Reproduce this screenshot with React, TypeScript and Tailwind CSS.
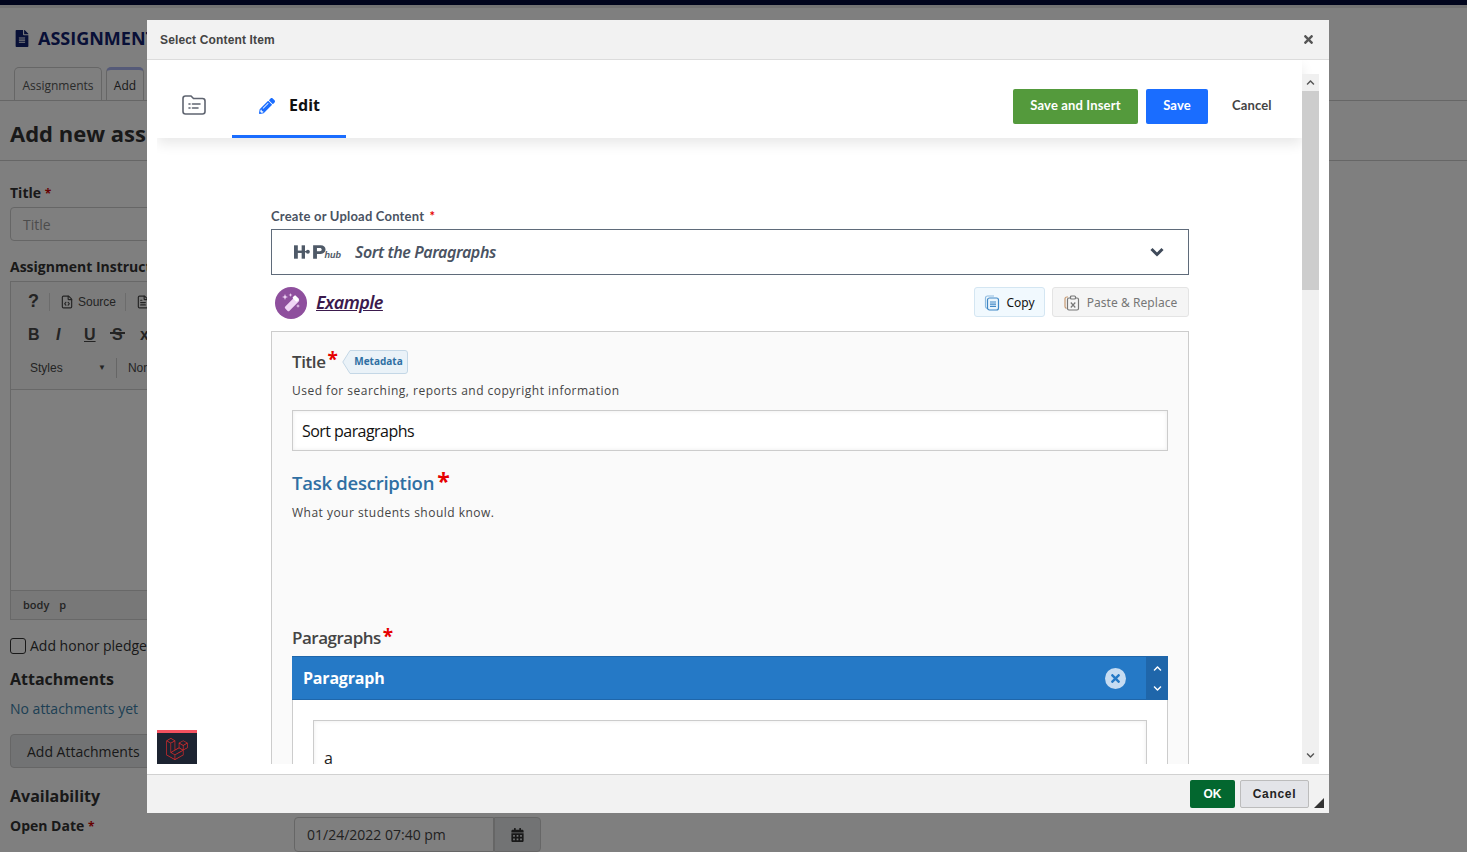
import React from "react";
import { FaFileAlt, FaCalendarAlt, FaLaravel, FaPencilAlt, FaTimes, FaChevronDown, FaChevronUp } from "react-icons/fa";
import { FileCode, FileText } from "lucide-react";

function FolderList() {
  return (
    <svg width="24" height="20" viewBox="0 0 24 20" fill="none" stroke="#5f6470" strokeWidth="1.6">
      <path d="M1 3.500C1 2 2 1 3.500 1H9l2.500 2.500h9C22 3.500 23 4.500 23 6v10.500c0 1.500-1 2.500-2.500 2.500h-17C2 19 1 18 1 16.500z" />
      <path d="M7 9h1M7 13h1M10.500 9H18M10.500 13H16" strokeLinecap="round" />
    </svg>
  );
}

function H5PLogo() {
  return (
    <svg width="34" height="16" viewBox="0 0 34 16" fill="#4f5a68">
      <rect x="0" y="1" width="4" height="14" />
      <rect x="8" y="1" width="3.500" height="14" />
      <rect x="3" y="6.500" width="6" height="2.500" />
      <rect x="11" y="7" width="5" height="1.400" />
      <circle cx="14.500" cy="7.700" r="2" />
      <path d="M20 1h8c3 0 5 1.800 5 4.500S31 10 28 10h-4v5h-4zM24 3.800v3.500h3c1.200 0 2-.7 2-1.800s-.8-1.700-2-1.700z" fillRule="evenodd" />
    </svg>
  );
}

function Wand() {
  return (
    <svg width="20" height="20" viewBox="0 0 20 20" fill="#f0d5f5">
      <rect x="8" y="3" width="6" height="16" rx="1.500" transform="rotate(45 11 11)" />
      <rect x="11.800" y="3.500" width="6" height="4" rx="1" transform="rotate(45 14.800 5.500)" fill="#ffffff" />
      <path d="M4 1l.8 2.200L7 4l-2.200.8L4 7l-.8-2.200L1 4l2.200-.8zM9.500 0l.5 1.500 1.500.5-1.500.5-.5 1.500L9 2.500 7.500 2 9 1.500zM17 11l.5 1.500 1.500.5-1.500.5-.5 1.500-.5-1.500L15 13l1.500-.5z" />
    </svg>
  );
}

function CopyIcon() {
  return (
    <svg width="16" height="16" viewBox="0 0 16 16" fill="none" strokeWidth="1.200">
      <path d="M3 13.500C1.800 13 1.500 12.500 1.500 11.500V3C1.500 1.800 2.300 1 3.500 1H10" stroke="#8fbce0" />
      <rect x="3.500" y="3" width="11" height="12" rx="2" stroke="#3f87c5" fill="#eaf5fc" />
      <path d="M6 7h6M6 9.200h6M6 11.400h6" stroke="#3f87c5" />
    </svg>
  );
}

function PasteIcon() {
  return (
    <svg width="16" height="16" viewBox="0 0 16 16" fill="none" strokeWidth="1.200">
      <path d="M2.500 13.500C1.500 13 1 12.500 1 11.500V4C1 2.800 1.800 2 3 2h1" stroke="#c79a72" />
      <rect x="3.500" y="3" width="11" height="12" rx="1.500" stroke="#777" />
      <rect x="6.500" y="1" width="5" height="3" rx="1" stroke="#777" fill="#f5f5f5" />
      <path d="M6.800 7.500l4.500 5M11.300 7.500l-4.500 5" stroke="#777" />
    </svg>
  );
}

function Background() {
  return (
    <div className="w-[1467px] h-[852px] overflow-hidden bg-white font-['Open_Sans',sans-serif] text-[#333]">
      <div className="h-[5px] bg-[#030b3a]" />
      <div className="h-[3px] bg-[#e6e6e6]" />
      <div className="pl-[15px] pt-[8px] flex items-center gap-[9px] h-[52px] text-[#10206e]">
        <FaFileAlt className="w-[14px] h-[17px]" />
        <span className="text-[18px] leading-[22px] font-bold whitespace-nowrap">ASSIGNMENTS</span>
      </div>
      <div className="mt-[8px] h-[33px] border-b border-[#ccc] pl-[14px] flex items-end gap-[4px] text-[12px]">
        <div className="w-[88px] h-[33px] border border-[#ccc] border-b-0 rounded-t-[5px] flex items-center justify-center text-[#555] pt-[3px]">Assignments</div>
        <div className="w-[38px] h-[33px] border border-[#ccc] border-t-[3px] border-t-[#aab4f0] border-b-0 rounded-t-[5px] bg-white flex items-center justify-center pt-[1px]">Add</div>
      </div>
      <div className="pl-[10px] pt-[6px] h-[60px] border-b border-[#ccc] flex items-center">
        <h1 className="text-[22px] font-bold text-[#333] whitespace-nowrap">Add new assignment</h1>
      </div>
      <div className="pl-[10px] pr-[10px]">
        <div className="mt-[22px] text-[14px] leading-[20px] font-bold">Title <span className="text-[#c00] text-[12px] leading-none">*</span></div>
        <div className="mt-[4px] h-[34px] w-[400px] border border-[#ccc] rounded-[4px] flex items-center pl-[12px] text-[14px] text-[#999]">Title</div>
        <div className="mt-[16px] text-[14px] leading-[20px] font-bold whitespace-nowrap">Assignment Instructions</div>
        <div className="mt-[4px] w-[500px] h-[339px] border border-[#d1d1d1] flex flex-col font-['Liberation_Sans',sans-serif] text-[12px] text-[#484848]">
          <div className="bg-[#f8f8f8] h-[108px] shrink-0 border-b border-[#d1d1d1] flex flex-col pl-[17px]">
            <div className="h-[40px] flex items-center">
              <span className="text-[18px] font-bold w-[21px]">?</span>
              <span className="border-l border-[#d8d8d8] h-[18px] mr-[10px]" />
              <FileCode className="w-[14px] h-[14px]" />
              <span className="ml-[4px] w-[39px]">Source</span>
              <span className="border-l border-[#d8d8d8] h-[18px] ml-[8px] mr-[10px]" />
              <FileText className="w-[14px] h-[14px]" />
            </div>
            <div className="h-[26px] flex items-center text-[16px] font-bold">
              <span className="w-[28px]">B</span>
              <span className="w-[28px] italic">I</span>
              <span className="w-[28px] underline">U</span>
              <span className="w-[28px]">
                <span className="relative inline-block">S<span className="absolute -left-[2px] -right-[2px] top-[9px] h-[2px] bg-[#484848]" /></span>
              </span>
              <span>x</span>
            </div>
            <div className="h-[42px] flex items-center">
              <span className="w-[70px] pl-[2px]">Styles</span><span className="text-[8px] mr-[10px]">▼</span><span className="border-l border-[#ccc] pl-[11px] leading-[20px]">Normal</span>
            </div>
          </div>
          <div className="flex-1" />
          <div className="h-[29px] bg-[#f0f0f0] border-t border-[#d1d1d1] flex items-center pl-[12px] gap-[10px] font-['Open_Sans',sans-serif] text-[11px] font-semibold"><span>body</span><span>p</span></div>
        </div>
        <label className="mt-[16px] flex items-center gap-[4px] text-[14px] leading-[20px] whitespace-nowrap">
          <span className="w-[16px] h-[16px] border border-[#333] rounded-[3px] bg-white inline-block" />Add honor pledge
        </label>
        <div className="mt-[12px] text-[16px] leading-[22px] font-bold">Attachments</div>
        <div className="mt-[9px] text-[14px] leading-[20px] text-[#3b7ea8]">No attachments yet</div>
        <div className="mt-[15px] w-[200px] h-[34px] rounded-[4px] border border-[#ccc] bg-[#e4e7e9] flex items-center pl-[16px] text-[14px]">Add Attachments</div>
        <div className="mt-[17px] text-[16px] leading-[22px] font-bold">Availability</div>
        <div className="mt-[9px] flex items-start">
          <div className="w-[284px] text-[14px] leading-[20px] font-bold">Open Date <span className="text-[#c00] text-[12px] leading-none">*</span></div>
          <div className="mt-[1px] w-[200px] h-[35px] border border-[#ccc] rounded-l-[4px] flex items-center pl-[12px] text-[14px] text-[#444]">01/24/2022 07:40 pm</div>
          <div className="mt-[1px] w-[47px] h-[35px] border border-[#ccc] rounded-r-[4px] bg-[#e4e7e9] flex items-center justify-center"><FaCalendarAlt className="w-[13px] h-[14px] text-[#333]" /></div>
        </div>
      </div>
    </div>
  );
}

function Req({ className = "" }: { className?: string }) {
  return <span className={"text-[#e60000] font-bold leading-none relative -top-[2px] " + className}>*</span>;
}

function Modal() {
  return (
    <div className="absolute left-[147px] top-[20px] w-[1182px] h-[793px] bg-white flex flex-col">
      <div className="h-[40px] shrink-0 bg-[#f2f2f2] border-b border-[#dcdcdc] flex items-center justify-between pl-[13px] pr-[15px]">
        <span className="font-['Liberation_Sans',sans-serif] text-[12px] font-bold tracking-[0.15px] text-[#444]">Select Content Item</span>
        <FaTimes className="w-[11px] h-[13px] text-[#555]" />
      </div>
      <div className="flex-1 min-h-0 pl-[10px] pr-[10px] pb-[10px] flex">
        <div className="relative flex-1 min-w-0 flex flex-col overflow-hidden font-['Lato',sans-serif]">
          <div className="relative z-10 mr-[17px] h-[78px] shrink-0 bg-white shadow-[0_6px_12px_rgba(0,0,0,0.09)] flex items-center pr-[30px]">
            <div className="pl-[25px] w-[75px] pt-[12px]"><FolderList /></div>
            <div className="w-[114px] h-[78px] border-b-[3px] border-[#1a6dff] flex items-center justify-center gap-[14px] pt-[16px] pl-[1px]">
              <FaPencilAlt className="w-[16px] h-[16px] text-[#1a6dff]" />
              <span className="text-[16px] font-bold text-[#111] font-['Noto_Sans',sans-serif] -translate-y-[1px]">Edit</span>
            </div>
            <div className="ml-auto flex items-center pt-[15px] text-[13px] font-bold tracking-[0.15px]">
              <div className="w-[125px] h-[35px] bg-[#549a3c] rounded-[2px] text-white flex items-center justify-center pb-[1px]">Save and Insert</div>
              <div className="w-[62px] h-[35px] ml-[8px] bg-[#1a6dff] rounded-[2px] text-white flex items-center justify-center pb-[1px]">Save</div>
              <div className="ml-[24px] w-[40px] pb-[1px] text-[#444]">Cancel</div>
            </div>
          </div>
          <div className="flex-1 min-h-0 overflow-hidden pl-[114px] pr-[130px] pt-[69px]">
            <div className="w-[918px]">
              <div className="text-[13px] leading-[18px] font-bold tracking-[0.2px] text-[#4a5362]">Create or Upload Content <span className="text-[#e60000] ml-[2px]">*</span></div>
              <div className="mt-[4px] h-[46px] border border-[#5f6b7a] flex items-center pl-[22px] pr-[24px]">
                <span className="w-[47px] flex items-end">
                  <H5PLogo />
                  <span className="font-['Liberation_Sans',sans-serif] text-[9px] font-bold italic leading-[10px] text-[#4f5a68] -ml-[2px]">hub</span>
                </span>
                <span className="ml-[14px] text-[16px] italic font-semibold text-[#4a5362] font-['Noto_Sans',sans-serif] tracking-[-0.4px]">Sort the Paragraphs</span>
                <svg className="ml-auto" width="14" height="10" viewBox="0 0 14 10" fill="none" stroke="#3f4a5a" strokeWidth="3">
                  <path d="M1.500 2l5.500 5.500L12.500 2" />
                </svg>
              </div>
              <div className="mt-[12px] h-[32px] flex items-start pl-[4px]">
                <span className="w-[32px] h-[32px] rounded-full bg-[#8e4f9d] flex items-center justify-center"><Wand /></span>
                <span className="ml-[9px] text-[18px] leading-[30px] italic font-semibold underline text-[#3b1a4d] font-['Noto_Sans',sans-serif] tracking-[-0.55px]">Example</span>
                <div className="ml-auto h-[30px] w-[71px] pt-[1px] rounded-[3px] border border-[#d4e6f2] bg-[#f1f9fe] flex items-center justify-center gap-[6px] text-[12px] text-[#111] font-['Noto_Sans',sans-serif]">
                  <CopyIcon />Copy
                </div>
                <div className="ml-[7px] h-[30px] w-[137px] pt-[1px] rounded-[3px] border border-[#e4e4e4] bg-[#f5f5f5] flex items-center justify-center gap-[7px] text-[12px] tracking-[0.05px] text-[#777] font-['Noto_Sans',sans-serif]">
                  <PasteIcon />Paste &amp; Replace
                </div>
              </div>
              <div className="mt-[12px] h-[500px] border border-[#ccc] bg-[#fafafa] pl-[20px] pr-[20px] font-['Open_Sans',sans-serif]">
                <div className="pt-[16px] h-[43px] flex items-center">
                  <span className="text-[17px] font-semibold text-[#444] tracking-[-0.4px]">Title</span>
                  <Req className="text-[19px] ml-[2px]" />
                  <span className="relative ml-[4px] h-[24px] w-[66px] flex items-center justify-center pl-[7px] text-[10px] font-bold text-[#2f6fa3]">
                    <svg className="absolute inset-0" width="66" height="24" viewBox="0 0 66 24">
                      <path d="M8 .5H63a2.500 2.500 0 0 1 2.500 2.500v18a2.500 2.500 0 0 1-2.500 2.500H8L.8 12z" fill="#eaf2f8" stroke="#c4d7e6" />
                    </svg>
                    <span className="relative">Metadata</span>
                  </span>
                </div>
                <div className="mt-[8px] text-[12px] leading-[16px] tracking-[0.49px] text-[#444]">Used for searching, reports and copyright information</div>
                <div className="mt-[11px] h-[41px] border border-[#ccc] bg-white shadow-[inset_0_0_4px_rgba(0,0,0,0.08)] flex items-center pl-[9px] text-[16px] tracking-[-0.55px] text-[#111]">Sort paragraphs</div>
                <div className="mt-[18px] h-[28px] flex items-center">
                  <span className="text-[18.5px] font-semibold text-[#2f6fa3] tracking-[-0.25px]">Task description</span>
                  <Req className="text-[23px] ml-[3px]" />
                </div>
                <div className="mt-[8px] text-[12px] leading-[16px] tracking-[0.48px] text-[#444]">What your students should know.</div>
                <div className="mt-[105px] h-[24px] flex items-center">
                  <span className="text-[17px] font-semibold text-[#444] tracking-[-0.5px]">Paragraphs</span>
                  <Req className="text-[19px] ml-[2px]" />
                </div>
                <div className="mt-[6px] h-[44px] bg-[#2579c6] border-y border-[#1f66aa] flex items-center pl-[11px]">
                  <span className="text-[16px] font-bold text-white tracking-[-0.2px]">Paragraph</span>
                  <span className="ml-auto w-[21px] h-[21px] rounded-full bg-[#c6dcf2] flex items-center justify-center"><FaTimes className="w-[11px] h-[13px] text-[#2579c6]" /></span>
                  <span className="ml-[20px] w-[22px] h-[44px] bg-[#1f66aa] flex flex-col items-center justify-center gap-[11px] text-white">
                    <FaChevronUp className="w-[9px] h-[9px]" /><FaChevronDown className="w-[9px] h-[9px]" />
                  </span>
                </div>
                <div className="h-[200px] border-x border-[#ccc] bg-white px-[20px] pt-[20px]">
                  <div className="h-[100px] border border-[#ccc] shadow-[inset_0_0_4px_rgba(0,0,0,0.08)] pl-[10px] pt-[25px] text-[16px] text-[#222]">a</div>
                </div>
              </div>
            </div>
          </div>
          <div className="absolute left-0 bottom-0 z-20 w-[40px] h-[34px] border-t-[3px] border-[#f4515f] bg-[#1c2331] flex items-center justify-center">
            <FaLaravel className="w-[22px] h-[22px] text-[#d92b2b]" />
          </div>
          <div className="absolute right-0 top-[14px] bottom-0 z-20 w-[17px] bg-[#f0f0f0] flex flex-col">
            <div className="h-[17px] flex items-center justify-center"><FaChevronUp className="w-[9px] h-[9px] text-[#555]" /></div>
            <div className="h-[199px] bg-[#cdcdcd]" />
            <div className="mt-auto h-[17px] flex items-center justify-center"><FaChevronDown className="w-[9px] h-[9px] text-[#555]" /></div>
          </div>
        </div>
      </div>
      <div className="relative h-[39px] shrink-0 bg-[#f2f2f2] border-t border-[#d1d1d1] flex items-center justify-end pr-[20px] gap-[5px] font-['Liberation_Sans',sans-serif] text-[12px] font-bold">
        <div className="w-[45px] h-[28px] bg-[#03672f] rounded-[2px] text-white flex items-center justify-center">OK</div>
        <div className="w-[69px] h-[28px] bg-[#e3e4e8] border border-[#bcbcbc] rounded-[2px] tracking-[0.7px] text-[#222] flex items-center justify-center">Cancel</div>
        <span className="absolute right-[5px] bottom-[5px] w-0 h-0 border-l-[10px] border-l-transparent border-b-[10px] border-b-[#333]" />
      </div>
    </div>
  );
}

export default function App() {
  return (
    <div className="relative w-[1467px] h-[852px] overflow-hidden">
      <Background />
      <div className="absolute inset-0 bg-black/50" />
      <Modal />
    </div>
  );
}
